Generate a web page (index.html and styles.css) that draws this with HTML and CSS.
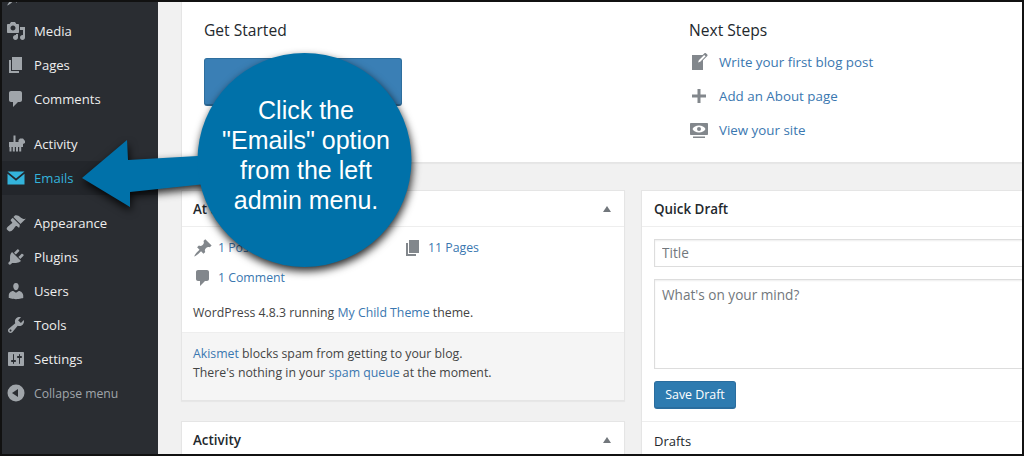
FILE: index.html
```html
<!DOCTYPE html>
<html lang="en">
<head>
<meta charset="utf-8">
<title>Dashboard</title>
<link rel="stylesheet" href="styles.css">
</head>
<body>
<div class="frame">
  <nav class="sidebar">
    <ul class="menu">
      <li class="item cut"><svg class="ico" viewBox="0 0 20 20"><path d="M10.440 3.020l1.820-1.820 6.360 6.350-1.830 1.820c-1.050-.68-2.480-.57-3.410.36l-.75.75c-.92.93-1.040 2.350-.35 3.410l-1.830 1.820-2.410-2.410-2.800 2.790c-.42.42-3.380 2.710-3.800 2.290s1.860-3.390 2.280-3.810l2.790-2.790L4.100 9.360l1.830-1.820c1.050.69 2.480.57 3.400-.36l.75-.75c.93-.92 1.050-2.350.36-3.410z"/></svg><span class="label">Posts</span></li>
      <li class="item"><svg class="ico" viewBox="0 0 20 20"><path d="M13 11V4c0-.55-.45-1-1-1h-1.67L9 1H5L3.67 3H2c-.55 0-1 .45-1 1v7c0 .55.45 1 1 1h10c.55 0 1-.45 1-1zM7 4.5c1.38 0 2.5 1.12 2.5 2.5S8.38 9.5 7 9.5 4.5 8.38 4.5 7 5.62 4.5 7 4.5zM14 6h5v10.5c0 1.38-1.12 2.5-2.5 2.5S14 17.88 14 16.5s1.12-2.5 2.5-2.5c.17 0 .34.02.5.05V9h-3V6zm-4 8.05V13h2v3.5c0 1.38-1.12 2.5-2.5 2.5S7 17.88 7 16.5 8.12 14 9.5 14c.17 0 .34.02.5.05z"/></svg><span class="label">Media</span></li>
      <li class="item"><svg class="ico" viewBox="0 0 20 20"><path d="M6 15V2h10v13H6zm-1 1h8v2H3V5h2v11z"/></svg><span class="label">Pages</span></li>
      <li class="item"><svg class="ico" viewBox="0 0 20 20"><path d="M5 2h9c1.1 0 2 .9 2 2v7c0 1.1-.9 2-2 2h-2l-5 5v-5H5c-1.1 0-2-.9-2-2V4c0-1.1.9-2 2-2z"/></svg><span class="label">Comments</span></li>
      <li class="item sep"><svg class="ico" viewBox="0 0 20 20"><path d="M7.500 1.500h2v6.500h-2zM3 8h9.500V6L14 4.500h3l2 2.500v2l-2 1v3H3zM3.500 13h2v4.500h-2zM6.800 13h2v4.500h-2zM10 13h2v4.500h-2zM13.200 13h2v4.500h-2z"/></svg><span class="label">Activity</span></li>
      <li class="item current"><svg class="ico" viewBox="0 0 20 20"><path d="M1.500 3.500h17L10 10.500zM1.500 5.700v10.800h17V5.700L10 12.700z"/></svg><span class="label">Emails</span></li>
      <li class="item sep"><svg class="ico" viewBox="0 0 20 20"><path d="M14.480 11.060L7.410 3.990l1.500-1.500c.5-.56 2.300-.47 3.510.32 1.210.8 1.430 1.280 2.910 2.100 1.180.64 2.450 1.260 4.450.85zm-.71.71L6.700 4.700 4.930 6.470c-.39.39-.39 1.020 0 1.410l1.060 1.060c.39.39.39 1.030 0 1.420-.6.6-1.430 1.110-2.210 1.690-.35.26-.7.53-1.010.84C1.430 13.430 0 15.500 1.170 16.670l1.410 1.410c1.170 1.170 3.240-.26 4.500-1.600.31-.31.58-.66.84-1.010.58-.78 1.090-1.610 1.690-2.210.39-.39 1.030-.39 1.420 0l1.060 1.060c.39.39 1.020.39 1.410 0z"/></svg><span class="label">Appearance</span></li>
      <li class="item"><svg class="ico" viewBox="0 0 20 20"><path d="M13.110 4.360L9.870 7.600 8 5.730l3.240-3.240c.35-.34 1.050-.2 1.560.32.52.51.66 1.210.31 1.550zm-8 1.770l.91-1.120 9.010 9.010-1.190.84c-.71.71-2.630 1.160-3.820 1.160H6.140L4.900 17.260c-.59.59-1.540.59-2.120 0-.59-.58-.59-1.530 0-2.120l1.240-1.240v-3.880c0-1.130.4-3.190 1.090-3.890zm7.260 3.970l3.240-3.240c.34-.35 1.040-.21 1.550.31.52.51.66 1.210.31 1.550l-3.240 3.250z"/></svg><span class="label">Plugins</span></li>
      <li class="item"><svg class="ico" viewBox="0 0 20 20"><path d="M10 9.250c-2.270 0-2.730-3.440-2.730-3.440C7 4.020 7.820 2 9.970 2c2.160 0 2.980 2.020 2.710 3.810 0 0-.41 3.440-2.680 3.440zm0 2.570L12.720 10c2.390 0 4.520 2.330 4.520 4.530v2.490s-3.650 1.130-7.240 1.130c-3.650 0-7.240-1.130-7.240-1.130v-2.490c0-2.250 1.940-4.480 4.470-4.480z"/></svg><span class="label">Users</span></li>
      <li class="item"><svg class="ico" viewBox="0 0 20 20"><path d="M16.680 9.770c-1.340 1.340-3.300 1.670-4.950.99l-5.410 6.520c-.99.99-2.590.99-3.580 0s-.99-2.590 0-3.570l6.520-5.420c-.68-1.650-.35-3.610.99-4.950 1.280-1.280 3.120-1.620 4.720-1.060l-2.890 2.890 2.820 2.820 2.860-2.870c.53 1.580.18 3.390-1.080 4.670zM3.810 16.210c.4.39 1.040.39 1.430 0 .4-.4.4-1.040 0-1.430-.39-.4-1.030-.4-1.430 0-.39.39-.39 1.030 0 1.430z"/></svg><span class="label">Tools</span></li>
      <li class="item"><svg class="ico" viewBox="0 0 20 20"><path d="M18 16V4c0-.55-.45-1-1-1H3c-.55 0-1 .45-1 1v12c0 .55.45 1 1 1h14c.55 0 1-.45 1-1zM8 11h1c.55 0 1 .45 1 1s-.45 1-1 1H8v1.500c0 .28-.22.5-.5.5s-.5-.22-.5-.5V13H6c-.55 0-1-.45-1-1s.45-1 1-1h1V5.500c0-.28.22-.5.5-.5s.5.22.5.5V11zm5-2h-1c-.55 0-1-.45-1-1s.45-1 1-1h1V5.500c0-.28.22-.5.5-.5s.5.22.5.5V7h1c.55 0 1 .45 1 1s-.45 1-1 1h-1v5.500c0 .28-.22.5-.5.5s-.5-.22-.5-.5V9z"/></svg><span class="label">Settings</span></li>
      <li class="item collapse"><svg class="ico" viewBox="0 0 20 20"><path fill-rule="evenodd" d="M10 1.500a8.500 8.500 0 1 1 0 17 8.500 8.500 0 0 1 0-17zM12 6v8L6 10z"/></svg><span class="label">Collapse menu</span></li>
    </ul>
  </nav>
  <main class="main">
    <div class="content">
      <section class="welcome">
        <div class="col-start">
          <h2 class="welcome-title">Get Started</h2>
          <div class="big-button"></div>
        </div>
        <div class="col-next">
          <h2 class="welcome-title">Next Steps</h2>
          <ul class="steps">
            <li class="step"><svg class="step-ico" viewBox="0 0 20 20"><path d="M16.890 1.200l1.410 1.410c.39.39.39 1.020 0 1.410L14 8.330V18H3V3h10.670l1.800-1.800c.4-.39 1.030-.4 1.420 0zm-5.660 8.480l5.370-5.360-1.420-1.420-5.360 5.370-.71 2.120z"/></svg><a class="link">Write your first blog post</a></li>
            <li class="step"><svg class="step-ico" viewBox="0 0 20 20"><path d="M17 8.500v3h-5.500V17h-3v-5.500H3v-3h5.500V3h3v5.500z"/></svg><a class="link">Add an About page</a></li>
            <li class="step"><svg class="step-ico" viewBox="0 0 20 20"><path fill-rule="evenodd" d="M2 3h16c.55 0 1 .45 1 1v10c0 .55-.45 1-1 1H2c-.55 0-1-.45-1-1V4c0-.55.45-1 1-1zm8 2.500C7 5.500 4.500 7 3.500 9c1 2 3.500 3.500 6.500 3.500s5.500-1.500 6.500-3.500c-1-2-3.500-3.500-6.500-3.500zM10 7a2 2 0 1 1 0 4 2 2 0 0 1 0-4zM4 16.500h12V18H4z"/></svg><a class="link">View your site</a></li>
          </ul>
        </div>
      </section>
      <div class="columns">
        <div class="column">
          <section class="box glance">
            <header class="box-head"><h3 class="box-title">At a Glance</h3><span class="toggle"></span></header>
            <div class="glance-body">
              <ul class="counts">
                <li class="count"><svg class="count-ico" viewBox="0 0 20 20"><path d="M10.440 3.020l1.820-1.820 6.360 6.350-1.830 1.820c-1.050-.68-2.480-.57-3.410.36l-.75.75c-.92.93-1.040 2.350-.35 3.410l-1.830 1.820-2.410-2.410-2.800 2.790c-.42.42-3.380 2.710-3.800 2.290s1.860-3.390 2.280-3.810l2.790-2.790L4.100 9.360l1.830-1.820c1.050.69 2.480.57 3.400-.36l.75-.75c.93-.92 1.050-2.350.36-3.410z"/></svg><a class="link">1 Post</a></li>
                <li class="count"><svg class="count-ico" viewBox="0 0 20 20"><path d="M6 15V2h10v13H6zm-1 1h8v2H3V5h2v11z"/></svg><a class="link">11 Pages</a></li>
                <li class="count"><svg class="count-ico" viewBox="0 0 20 20"><path d="M5 2h9c1.100 0 2 .9 2 2v7c0 1.100-.9 2-2 2h-2l-5 5v-5H5c-1.100 0-2-.9-2-2V4c0-1.100.9-2 2-2z"/></svg><a class="link">1 Comment</a></li>
              </ul>
              <p class="version">WordPress 4.8.3 running <a class="link">My Child Theme</a> theme.</p>
            </div>
            <footer class="akismet">
              <p class="ak-line"><a class="link">Akismet</a> blocks spam from getting to your blog.</p>
              <p class="ak-line">There's nothing in your <a class="link">spam queue</a> at the moment.</p>
            </footer>
          </section>
          <section class="box activity">
            <header class="box-head"><h3 class="box-title">Activity</h3><span class="toggle"></span></header>
          </section>
        </div>
        <div class="column">
          <section class="box draft">
            <header class="box-head"><h3 class="box-title">Quick Draft</h3></header>
            <form class="draft-form">
              <input class="field title-field" type="text" placeholder="Title">
              <textarea class="field body-field" placeholder="What's on your mind?"></textarea>
              <button class="save" type="button">Save Draft</button>
            </form>
            <div class="drafts">Drafts</div>
          </section>
        </div>
      </div>
    </div>
  </main>
  <div class="callout">
    <svg class="callout-shape" viewBox="0 0 430 280"><path d="M82 178L127 140L128 160L215 155V183L130 192V207z"/><circle cx="304.500" cy="160" r="107"/></svg>
    <p class="callout-text">Click the<br>"Emails" option<br>from the left<br>admin menu.</p>
  </div>
</div>
</body>
</html>
```
FILE: styles.css
```css
* { box-sizing: border-box; }
html, body { margin: 0; padding: 0; }
body { width: 1024px; height: 456px; overflow: hidden; font: 12.300px/19px "Open Sans", sans-serif; color: #444; }
ul { list-style: none; margin: 0; padding: 0; }
p, h2, h3 { margin: 0; }
.frame { position: relative; display: flex; width: 1024px; height: 456px; border: 2px solid #111; overflow: hidden; background: #f1f1f1; }

.sidebar { flex: none; width: 156px; background: #2a2d32; overflow: hidden; }
.menu { margin-top: -22px; }
.item { display: flex; align-items: center; height: 34px; padding-left: 4px; color: #eee; font-size: 13.100px; }
.item.sep { margin-top: 11px; }
.item.current { background: #23262b; color: #33b3db; }
.item.current .ico { fill: #33b3db; }
.item.collapse { color: #a0a5aa; font-size: 12.200px; }
.ico { flex: none; width: 20px; height: 20px; fill: #a0a5aa; }
.label { margin-left: 8px; }

.main { flex: 1; min-width: 0; overflow: hidden; }
.content { width: 900px; padding-left: 23px; }
.welcome { display: flex; height: 161px; background: #fff; border: 1px solid #e5e5e5; border-top: 0; box-shadow: 0 1px 1px rgba(0,0,0,.04); padding: 18px 0 0 22px; }
.col-start { width: 485px; }
.welcome-title { font-size: 15.600px; font-weight: 400; line-height: 20px; color: #23282d; }
.big-button { width: 198px; height: 48px; margin-top: 18px; background: #3a7fb5; border: 1px solid #2e6e9e; border-bottom: 2px solid #2b6692; border-radius: 3px; }
.steps { margin-top: 5px; font-size: 13.350px; }
.step { display: flex; align-items: center; height: 34px; }
.step-ico { flex: none; width: 20px; height: 20px; margin-right: 10px; fill: #82878c; }
.link { color: #3a77b0; }

.columns { display: flex; gap: 16px; margin-top: 27px; }
.column { flex: none; width: 444px; }
.column + .column { width: 440px; }
.box { background: #fff; border: 1px solid #e5e5e5; box-shadow: 0 1px 1px rgba(0,0,0,.04); }
.box-head { display: flex; justify-content: space-between; align-items: center; height: 36px; padding: 1px 13px 0 11px; border-bottom: 1px solid #eee; }
.draft .box-head { padding-left: 12px; }
.box-title { font-size: 13.400px; font-weight: 600; color: #23282d; line-height: 19px; }
.toggle { width: 0; height: 0; border-left: 4px solid transparent; border-right: 4px solid transparent; border-bottom: 6px solid #72777c; }

.glance-body { height: 105px; padding: 11px 11px 0; }
.counts { display: grid; grid-template-columns: 210px 1fr; row-gap: 11px; }
.count { display: flex; align-items: center; height: 19px; }
.count-ico { flex: none; width: 20px; height: 20px; margin-right: 5px; fill: #82878c; }
.version { margin-top: 16px; }
.akismet { height: 68px; padding: 11px 11px 0; background: #f5f5f5; border-top: 1px solid #eee; }

.activity { margin-top: 20px; height: 60px; }
.draft { height: 300px; }
.draft-form { display: flex; flex-direction: column; align-items: flex-start; padding: 12px 12px 0; }
.field { display: block; width: 100%; margin: 0; font: 13.600px/19px "Open Sans", sans-serif; color: #32373c; background: #fff; border: 1px solid #ddd; padding: 3px 7px; outline: 0; resize: none; box-shadow: inset 0 1px 2px rgba(0,0,0,.07); }
.field::placeholder { color: #72777c; opacity: 1; }
.title-field { height: 28px; padding: 1px 7px 3px; }
.body-field { height: 90px; margin-top: 12px; padding-top: 5px; }
.save { width: 82px; height: 28px; margin-top: 12px; padding: 2px 0 0; font: 12.400px/1 "Open Sans", sans-serif; color: #fff; background: #2e7bb0; border: 1px solid #2a6d9e; border-bottom-width: 2px; border-radius: 3px; }
.drafts { margin-top: 12px; padding: 10px 12px; border-top: 1px solid #eee; color: #23282d; font-size: 13px; }

.callout { position: absolute; left: -2px; top: -2px; width: 430px; height: 280px; }
.callout-shape { display: block; width: 430px; height: 280px; fill: #0071a9; overflow: visible; filter: drop-shadow(1px 4px 4px rgba(0,0,0,.85)); }
.callout-text { position: absolute; left: 198px; top: 95px; width: 216px; text-align: center; font: 25px/30px "Liberation Sans", Arial, sans-serif; color: #fff; }
```
